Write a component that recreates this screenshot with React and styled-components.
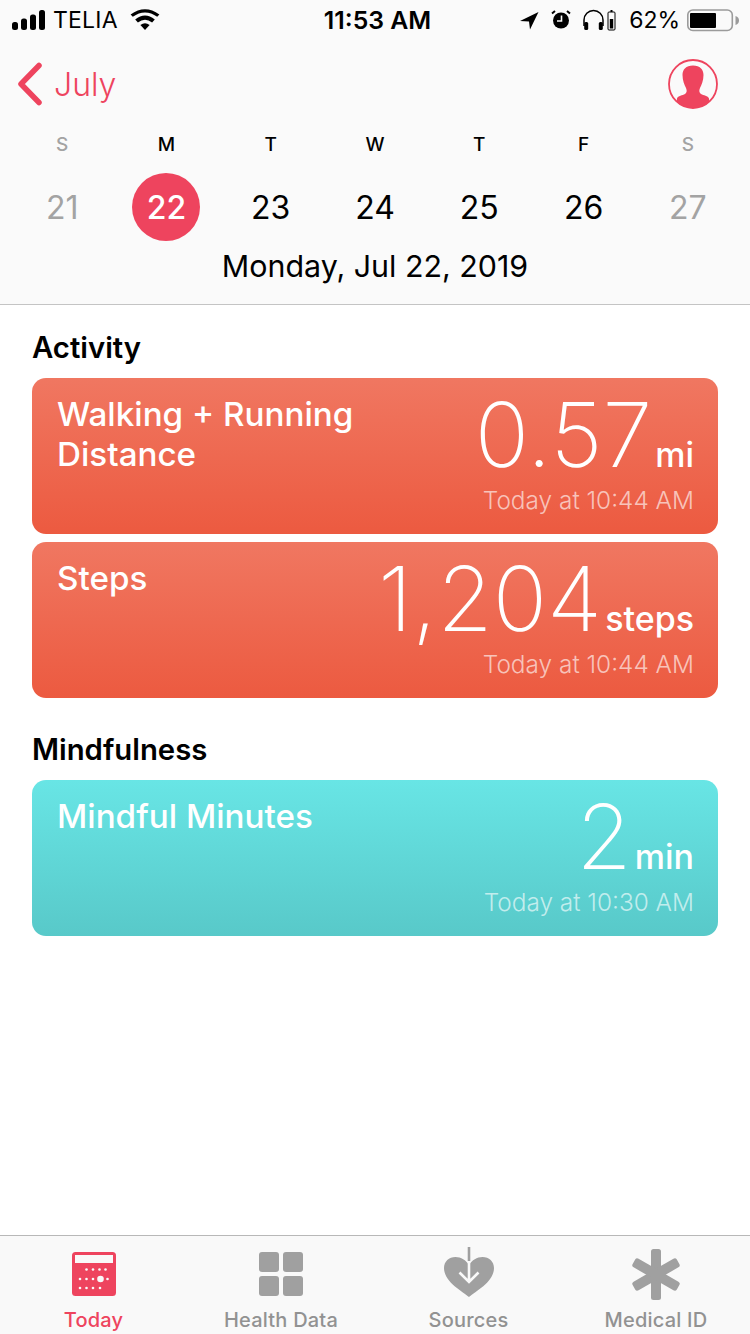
import React from "react";
import styled, { createGlobalStyle } from "styled-components";

const Global = createGlobalStyle`
  html, body { margin: 0; padding: 0; background: #fff; }
  body { font-family: Inter, "Liberation Sans", sans-serif; }
`;

const Page = styled.div`
  width: 750px; height: 1334px; display: flex; flex-direction: column; overflow: hidden; background: #fff;
`;
const Header = styled.header`
  height: 304px; background: #fafafa; border-bottom: 1px solid #c4c4c4; flex: none; display: flex; flex-direction: column;
`;
const StatusBar = styled.div`
  height: 40px; display: grid; grid-template-columns: 1fr auto 1fr; align-items: center; color: #000; font-size: 24px;
`;
const StatusLeft = styled.div`
  display: flex; align-items: center; padding-left: 12px; gap: 7px;
`;
const Carrier = styled.span`
  font-size: 23px; font-weight: 400; letter-spacing: 0.2px;
`;
const Clock = styled.span`
  font-size: 24.8px; font-weight: 600; padding-left: 5px;
`;
const StatusRight = styled.div`
  display: flex; align-items: center; justify-content: flex-end; padding-right: 11px;
`;
const Percent = styled.span`
  font-size: 23px; font-weight: 400; margin: 0 5px 0 13px;
`;
const Nav = styled.div`
  height: 76px; display: flex; align-items: center; justify-content: space-between; padding: 12px 32px 0 17px; box-sizing: border-box;
`;
const Back = styled.div`
  display: flex; align-items: center; gap: 11px; color: #ee445e; font-size: 32px; font-weight: 300;
`;
const Week = styled.div`
  display: grid; grid-template-columns: repeat(7, 1fr); padding: 0 10px;
`;
const Letter = styled.div`
  text-align: center; height: 40px; line-height: 58px; font-size: 19px; font-weight: 500;
  color: ${p => (p.$muted ? "#a3a3a3" : "#000")};
`;
const Day = styled.div`
  height: 68px; display: flex; align-items: center; justify-content: center; margin-top: 17px;
`;
const DayNum = styled.span`
  width: 68px; height: 68px; border-radius: 50%; display: flex; align-items: center; justify-content: center;
  font-size: 32px; font-weight: ${p => (p.$active ? 500 : 400)};
  color: ${p => (p.$active ? "#fff" : p.$muted ? "#a3a3a3" : "#000")};
  background: ${p => (p.$active ? "#ee445e" : "transparent")};
`;
const DateLine = styled.div`
  text-align: center; font-size: 30.4px; font-weight: 400; line-height: 40px; margin-top: 5px; color: #000;
`;
const Main = styled.main`
  flex: 1; padding: 0 32px; display: flex; flex-direction: column;
`;
const SectionTitle = styled.h2`
  margin: ${p => (p.$first ? "24px" : "25px")} 0 11px 0; font-size: 29.3px; line-height: 38px; font-weight: 600; color: #000; height: 38px;
`;
const Card = styled.div`
  height: 156px; box-sizing: border-box; border-radius: 14px; margin-bottom: 8px; padding: 16px 24px 0 25px;
  display: flex; justify-content: space-between; color: #fff;
  background: linear-gradient(180deg, ${p => p.$from}, ${p => p.$to});
`;
const CardTitle = styled.div`
  font-size: 33.2px; line-height: 40px; font-weight: 500; width: 330px;
`;
const CardRight = styled.div`
  display: flex; flex-direction: column; align-items: flex-end;
`;
const Reading = styled.div`
  display: flex; align-items: baseline; height: 88px; line-height: 82px;
`;
const Value = styled.span`
  font-size: 90px; font-weight: 250;
`;
const Unit = styled.span`
  font-size: 34px; font-weight: 500; margin-left: 3px;
`;
const Time = styled.div`
  font-size: 24.4px; line-height: 32px; font-weight: 300; color: rgba(255,255,255,0.64); margin-top: 2px;
`;
const Tabs = styled.nav`
  height: 99px; flex: none; box-sizing: border-box; background: #f9f9f9; border-top: 1px solid #b8b8b8;
  display: grid; grid-template-columns: 187px 188px 187px 188px;
`;
const Tab = styled.div`
  display: flex; flex-direction: column; align-items: center; color: ${p => (p.$active ? "#ee445e" : "#929292")};
`;
const TabIcon = styled.div`
  height: 76px; display: flex; align-items: center; justify-content: center;
`;
const TabLabel = styled.span`
  font-size: 20px; line-height: 24px; font-weight: 500; margin-top: -4px; letter-spacing: 0.2px;
`;

const Signal = () => (
  <svg width="34" height="22" viewBox="0 0 34 22">
    <rect x="0" y="13" width="6" height="8" rx="2.5" /><rect x="9" y="9.5" width="6" height="11.5" rx="2.5" />
    <rect x="18" y="5.5" width="6" height="15.5" rx="2.5" /><rect x="27" y="1" width="6" height="20" rx="2.5" />
  </svg>
);
const Wifi = () => (
  <svg width="30" height="22" viewBox="0 0 30 22" style={{ marginLeft: 5 }}>
    <path d="M15 21 L10.4 16 Q15 12.4 19.6 16Z" />
    <path d="M7.9 13.4 L5.2 10.4 Q15 2.8 24.8 10.4 L22.1 13.4 Q15 8 7.9 13.4Z" />
    <path d="M2.8 7.8 L0.6 5.4 Q15 -5 29.4 5.4 L27.2 7.8 Q15 -1 2.8 7.8Z" />
  </svg>
);
const Loc = () => (
  <svg width="20" height="20" viewBox="0 0 20 20" style={{ marginRight: 11 }}>
    <path d="M19.500 2 L1 11 L10 11.500 L11 19.500Z" />
  </svg>
);
const Alarm = () => (
  <svg width="22" height="22" viewBox="0 0 22 22" style={{ marginRight: 11 }}>
    <circle cx="11" cy="11.500" r="8" /><path d="M11.500 6.500v5.500H7" stroke="#fafafa" strokeWidth="1.600" fill="none" />
    <path d="M2 4.500 L5 2M20 4.500 L17 2" stroke="#000" strokeWidth="2" />
  </svg>
);
const Phones = () => (
  <svg width="33" height="22" viewBox="0 0 33 22">
    <path d="M1 17 V11 A9.500 9.500 0 0 1 20 11 V17" fill="none" stroke="#000" strokeWidth="1.500" />
    <rect x="1.200" y="13" width="4" height="8" rx="1.500" /><rect x="15.800" y="13" width="4" height="8" rx="1.500" />
    <rect x="25" y="3" width="7" height="18" rx="1" fill="none" stroke="#000" strokeWidth="1" />
    <rect x="27.500" y="1" width="2" height="2" /><rect x="26.800" y="10" width="3.400" height="9.500" />
  </svg>
);
const Battery = () => (
  <svg width="54" height="24" viewBox="0 0 54 24">
    <rect x="2.800" y="2" width="44.500" height="20.500" rx="5" fill="none" stroke="#9b9b9b" strokeWidth="1.600" />
    <rect x="5" y="5" width="26" height="15" rx="1" fill="#000" />
    <path d="M50.500 8 C53 8.500 54 10.500 54 12.500 C54 14.500 53 16.500 50.500 17Z" fill="#9b9b9b" />
  </svg>
);
const Chevron = () => (
  <svg width="26" height="44" viewBox="0 0 26 44">
    <path d="M22 3.500 L4 22 L22 40.500" fill="none" stroke="#ee445e" strokeWidth="5.500" strokeLinecap="round" strokeLinejoin="round" />
  </svg>
);
const Avatar = () => (
  <svg width="50" height="50" viewBox="0 0 50 50">
    <defs><clipPath id="av"><circle cx="25" cy="25" r="24" /></clipPath></defs>
    <circle cx="25" cy="25" r="24" fill="none" stroke="#ee445e" strokeWidth="1.800" />
    <path clipPath="url(#av)" fill="#ee445e" d="M25 6.500C18 6.500 14.500 10.500 14.500 16C14.500 21.500 16.500 26 18 29C19 31.500 19 33.500 17 35C14.500 36.500 10 36.500 9 39.500L8 50H42L41 39.500C40 36.500 35.500 36.500 33 35C31 33.500 31 31.500 32 29C33.500 26 35.500 21.500 35.500 16C35.500 10.500 32 6.500 25 6.500Z" />
  </svg>
);
const todayDots = [
  [14.5, 17.5], [21, 17.5], [27.5, 17.5], [33.5, 17.5],
  [8, 27], [14.5, 27], [21, 27], [35.5, 27],
  [8, 36], [14.5, 36], [21, 36], [28, 36],
];
const TodayIcon = () => (
  <svg width="44" height="44" viewBox="0 0 44 44">
    <rect width="44" height="44" rx="3.500" fill="#ee445e" />
    <rect x="3" y="3" width="38" height="8" fill="#f9f9f9" />
    {todayDots.map(([x, y], i) => <circle key={i} cx={x} cy={y} r="1.300" fill="#f9f9f9" />)}
    <circle cx="28.500" cy="27" r="3.300" fill="#f9f9f9" />
  </svg>
);
const GridIcon = () => (
  <svg width="44" height="44" viewBox="0 0 44 44" fill="#a0a0a0">
    <rect width="20" height="20" rx="3" /><rect x="24" width="20" height="20" rx="3" />
    <rect y="24" width="20" height="20" rx="3" /><rect x="24" y="24" width="20" height="20" rx="3" />
  </svg>
);
const SourcesIcon = () => (
  <svg width="50" height="50" viewBox="0 0 50 50" style={{ marginBottom: 4 }}>
    <path fill="#a0a0a0" d="M25 50 C18 44 0 35 0 21 C0 14.500 5 10 11.500 10 C17 10 22 13 25 18 C28 13 33 10 38.500 10 C45 10 50 14.500 50 21 C50 35 32 44 25 50Z" />
    <path d="M25 14 V35 M15.500 25.500 L25 35 L34.500 25.500" fill="none" stroke="#f9f9f9" strokeWidth="2.600" />
    <path d="M25 0 V14" stroke="#a0a0a0" strokeWidth="2.600" />
  </svg>
);
const StarIcon = () => (
  <svg width="48" height="51" viewBox="0 0 48 51">
    <g fill="#a0a0a0">
      <rect x="19" y="0" width="10" height="51" rx="2.500" />
      <rect x="19" y="0" width="10" height="51" rx="2.500" transform="rotate(60 24 25.500)" />
      <rect x="19" y="0" width="10" height="51" rx="2.500" transform="rotate(-60 24 25.500)" />
    </g>
  </svg>
);

const days = [
  ["S", 21, true], ["M", 22, false, true], ["T", 23], ["W", 24], ["T", 25], ["F", 26], ["S", 27, true],
];

const Metric = ({ title, value, unit, time, from, to }) => (
  <Card $from={from} $to={to}>
    <CardTitle>{title}</CardTitle>
    <CardRight>
      <Reading><Value>{value}</Value><Unit>{unit}</Unit></Reading>
      <Time>{time}</Time>
    </CardRight>
  </Card>
);

export default function App() {
  return (
    <Page>
      <Global />
      <Header>
        <StatusBar>
          <StatusLeft><Signal /><Carrier>TELIA</Carrier><Wifi /></StatusLeft>
          <Clock>11:53 AM</Clock>
          <StatusRight>
            <Loc /><Alarm /><Phones /><Percent>62%</Percent><Battery />
          </StatusRight>
        </StatusBar>
        <Nav>
          <Back><Chevron /><span>July</span></Back>
          <Avatar />
        </Nav>
        <Week>
          {days.map(([l, , muted], i) => <Letter key={i} $muted={muted}>{l}</Letter>)}
        </Week>
        <Week>
          {days.map(([, n, muted, active]) => (
            <Day key={n}><DayNum $muted={muted} $active={active}>{n}</DayNum></Day>
          ))}
        </Week>
        <DateLine>Monday, Jul 22, 2019</DateLine>
      </Header>
      <Main>
        <SectionTitle $first>Activity</SectionTitle>
        <Metric title="Walking + Running Distance" value="0.57" unit="mi" time="Today at 10:44 AM" from="#f07761" to="#ec5a40" />
        <Metric title="Steps" value="1,204" unit="steps" time="Today at 10:44 AM" from="#f07761" to="#ec5a40" />
        <SectionTitle>Mindfulness</SectionTitle>
        <Metric title="Mindful Minutes" value="2" unit="min" time="Today at 10:30 AM" from="#68e5e5" to="#58c9c9" />
      </Main>
      <Tabs>
        <Tab $active><TabIcon><TodayIcon /></TabIcon><TabLabel>Today</TabLabel></Tab>
        <Tab><TabIcon><GridIcon /></TabIcon><TabLabel>Health Data</TabLabel></Tab>
        <Tab><TabIcon><SourcesIcon /></TabIcon><TabLabel>Sources</TabLabel></Tab>
        <Tab><TabIcon><StarIcon /></TabIcon><TabLabel>Medical ID</TabLabel></Tab>
      </Tabs>
    </Page>
  );
}
